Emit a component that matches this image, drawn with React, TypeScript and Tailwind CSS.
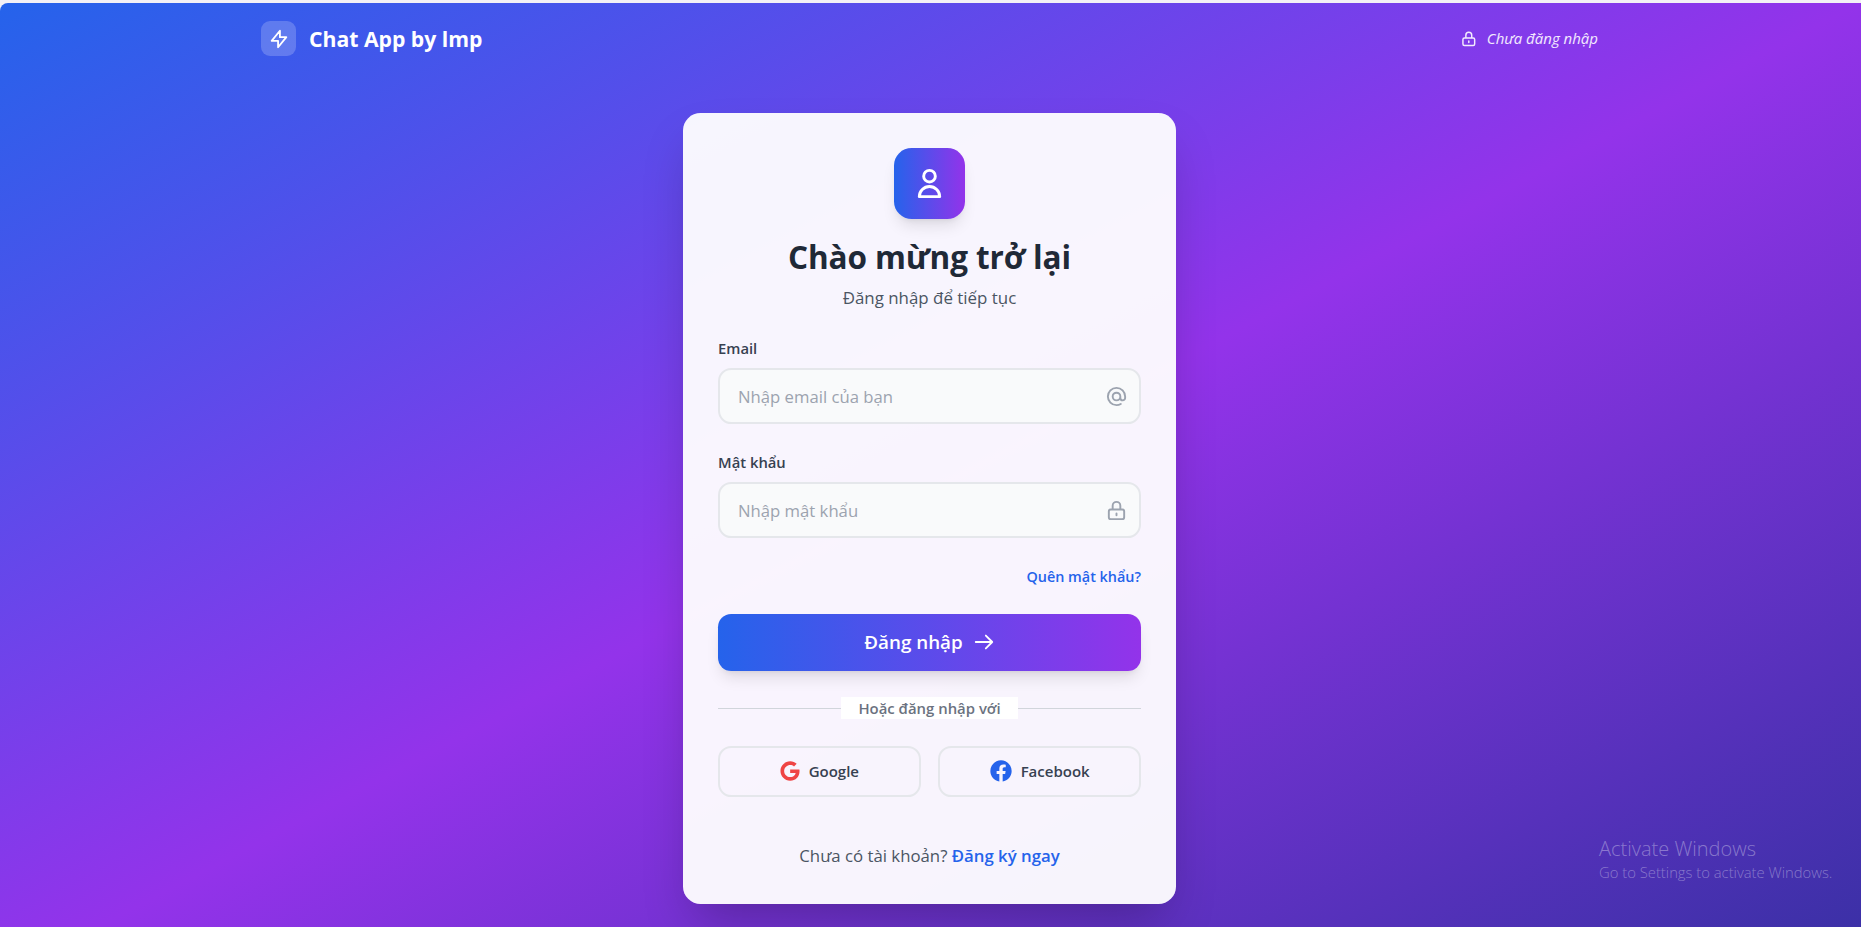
import React from 'react';
import {
  HiOutlineArrowRight,
  HiOutlineAtSymbol,
  HiOutlineLightningBolt,
  HiOutlineLockClosed,
  HiOutlineUser
} from 'react-icons/hi';
import { FaFacebook, FaGoogle } from 'react-icons/fa';

function App() {
  return (
    <div className="relative h-[927px] overflow-hidden bg-[#f3f1f6] pt-[3px] font-['Open_Sans','Noto_Sans',sans-serif]">
      <div className="h-[975px] rounded-tl-[8px] bg-linear-to-br/srgb from-[#2563eb] via-[#9333ea] to-[#3730a3] pr-[2px]">
        <header className="mx-auto flex h-[71px] w-[1337px] items-center justify-between">
          <div className="flex items-center gap-[13px]">
            <div className="flex h-[35px] w-[35px] items-center justify-center rounded-[9px] bg-white/20">
              <HiOutlineLightningBolt className="h-[22px] w-[22px] text-white" />
            </div>
            <span className="text-[21.2px] font-bold text-white">Chat App by lmp</span>
          </div>
          <div className="flex items-center gap-[9px] text-white/90">
            <HiOutlineLockClosed className="h-[17.6px] w-[17.6px]" />
            <span className="text-[15px] italic">Chưa đăng nhập</span>
          </div>
        </header>

        <main className="flex justify-center pt-[39px]">
          <div className="h-[791px] w-[493px] rounded-[17.6px] bg-white/95 p-[35px] shadow-2xl">
            <div className="flex flex-col items-center">
              <div className="flex h-[71px] w-[71px] items-center justify-center rounded-[17.6px] bg-linear-to-r/srgb from-[#2563eb] to-[#9333ea] shadow-lg">
                <HiOutlineUser className="h-[35px] w-[35px] text-white" />
              </div>
              <h1 className="mt-[18px] text-[31.5px] leading-[40px] font-bold tracking-[-0.1px] text-[#1f2937]">Chào mừng trở lại</h1>
              <p className="mt-[8px] text-[16.9px] leading-[26px] text-[#4b5563]">Đăng nhập để tiếp tục</p>
            </div>

            <form className="mt-[25.5px]">
              <label className="block text-[14.8px] leading-[22px] font-[550] text-[#374151]">Email</label>
              <div className="relative mt-[9.5px]">
                <input
                  placeholder="Nhập email của bạn"
                  className="h-[56px] w-full rounded-[13.2px] border-[2.2px] border-[#e5e7eb] bg-[#f9fafb] pr-[48px] pl-[18px] text-[16.7px] outline-none placeholder:text-[#9ca3af]"
                />
                <HiOutlineAtSymbol className="absolute top-[17px] right-[13px] h-[23px] w-[23px] text-[#9ca3af]" />
              </div>

              <label className="mt-[27.3px] block text-[14.8px] leading-[22px] font-[550] text-[#374151]">Mật khẩu</label>
              <div className="relative mt-[9px]">
                <input
                  placeholder="Nhập mật khẩu"
                  className="h-[56px] w-full rounded-[13.2px] border-[2.2px] border-[#e5e7eb] bg-[#f9fafb] pr-[48px] pl-[18px] text-[16.7px] outline-none placeholder:text-[#9ca3af]"
                />
                <HiOutlineLockClosed className="absolute top-[17px] right-[13px] h-[23px] w-[23px] text-[#9ca3af]" />
              </div>

              <div className="mt-[27.7px] flex justify-end">
                <a className="text-[14.4px] leading-[22px] font-semibold text-[#2563eb]">Quên mật khẩu?</a>
              </div>

              <button
                type="button"
                className="mt-[26px] flex h-[57px] w-full items-center justify-center gap-[10px] rounded-[13.2px] bg-linear-to-r/srgb from-[#2563eb] to-[#9333ea] text-[18.8px] font-semibold text-white shadow-lg"
              >
                Đăng nhập
                <HiOutlineArrowRight className="h-[22px] w-[22px]" />
              </button>
            </form>

            <div className="relative mt-[26px] flex h-[22px] items-center justify-center">
              <div className="absolute inset-x-0 top-[11px] border-t border-[#d1d5db]"></div>
              <span className="relative bg-white px-[17.6px] text-[14.9px] leading-[22px] font-[550] text-[#6b7280]">Hoặc đăng nhập với</span>
            </div>

            <div className="mt-[27px] grid grid-cols-2 gap-[17.6px]">
              <button type="button" className="flex h-[51px] items-center justify-center gap-[9px] rounded-[13.2px] border-[2.2px] border-[#e5e7eb] text-[15px] font-[550] text-[#374151]">
                <FaGoogle className="h-[20px] w-[20px] text-[#ef4444]" />
                Google
              </button>
              <button type="button" className="flex h-[51px] items-center justify-center gap-[9px] rounded-[13.2px] border-[2.2px] border-[#e5e7eb] text-[15px] font-[550] text-[#374151]">
                <FaFacebook className="h-[22px] w-[22px] text-[#2563eb]" />
                Facebook
              </button>
            </div>

            <p className="mt-[46px] text-center text-[16.8px] leading-[26px] text-[#4b5563]">
              Chưa có tài khoản? <a className="font-semibold text-[#2563eb]">Đăng ký ngay</a>
            </p>
          </div>
        </main>
      </div>

      {/* windows watermark, sits over the page */}
      <div className="absolute top-[835px] left-[1599px] font-['Open_Sans',sans-serif] text-white/35">
        <div className="text-[20px] leading-[27px] font-light">Activate Windows</div>
        <div className="text-[14.8px] leading-[20px] font-light">Go to Settings to activate Windows.</div>
      </div>
    </div>
  );
}

export default App;
